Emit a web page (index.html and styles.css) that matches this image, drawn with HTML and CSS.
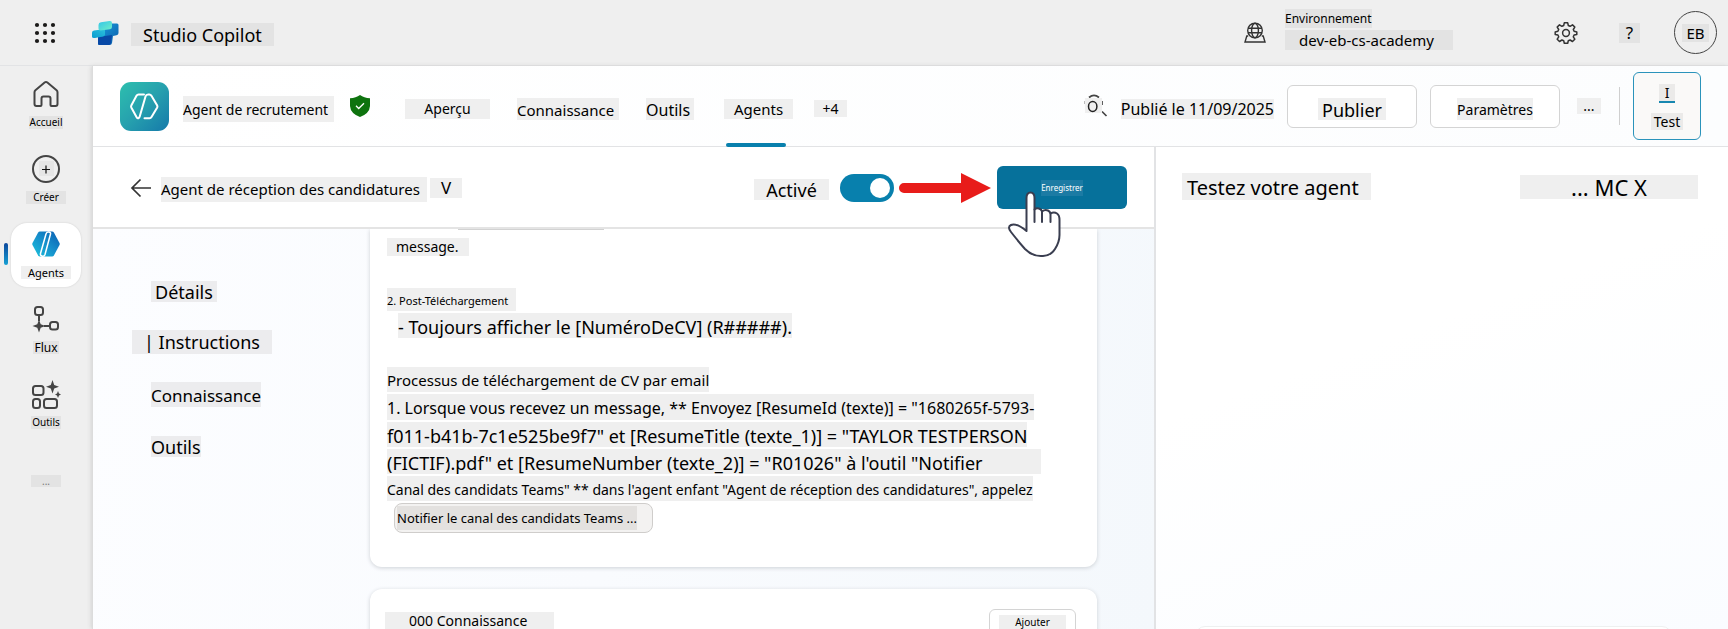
FILE: index.html
```html
<!DOCTYPE html>
<html lang="fr">
<head>
<meta charset="utf-8">
<meta name="viewport" content="width=device-width, initial-scale=1">
<title>Studio Copilot</title>
<link rel="stylesheet" href="styles.css">
</head>
<body>
<header class="topbar">
  <button class="icon-btn waffle" aria-label="Applications">
    <svg width="22" height="22" viewBox="0 0 22 22" fill="#1b1a19"><circle cx="3" cy="3" r="2.1"/><circle cx="11" cy="3" r="2.1"/><circle cx="19" cy="3" r="2.1"/><circle cx="3" cy="11" r="2.1"/><circle cx="11" cy="11" r="2.1"/><circle cx="19" cy="11" r="2.1"/><circle cx="3" cy="19" r="2.1"/><circle cx="11" cy="19" r="2.1"/><circle cx="19" cy="19" r="2.1"/></svg>
  </button>
  <svg class="brand-logo" width="28" height="26" viewBox="0 0 28 26">
    <defs>
      <linearGradient id="b1" x1="0" y1="0" x2="1" y2="1"><stop offset="0" stop-color="#35c5e8"/><stop offset="1" stop-color="#70f0c8"/></linearGradient>
      <linearGradient id="b2" x1="0" y1="0" x2="1" y2="1"><stop offset="0" stop-color="#1a9fe0"/><stop offset="1" stop-color="#0a5ba8"/></linearGradient>
      <linearGradient id="b3" x1="0" y1="1" x2="1" y2="0"><stop offset="0" stop-color="#0a9cd0"/><stop offset="1" stop-color="#2cc0dc"/></linearGradient>
    </defs>
    <path d="M19 3.500h7q1.500 0 1.500 1.500v8q0 2-2 2.300l-3.500.7-1 7q-.3 2-2.500 2H8.500Q7 25 7 23.500V16z" fill="url(#b2)"/>
    <path d="M7 17l7-1 7-1-1 8q-.4 2-2.500 2H8.500Q7 25 7 23.500z" fill="#0849a6"/>
    <path d="M3 10.500l11-1.500v5.500q0 1.500-2 2l-8 1.500q-3 .5-3-1.500v-4q0-1.700 2-2z" fill="url(#b3)"/>
    <path d="M10 2.200l8.500-1.100Q21 .8 21 3v4q0 2-2 2.300L9.500 10.500Q7.500 10.600 7.500 8.500V5q0-2.500 2.500-2.800z" fill="url(#b1)"/>
  </svg>
  <h1 class="hl dark brand">Studio Copilot</h1>
  <div class="top-right">
    <svg width="22" height="22" viewBox="0 0 22 22" fill="none" stroke="#333" stroke-width="1.400"><circle cx="11" cy="8.500" r="7.300"/><ellipse cx="11" cy="8.500" rx="3.400" ry="7.300"/><path d="M4 6.300h14M4 10.800h14M4.200 14H2.800L1 20h20l-1.800-6h-1.400"/></svg>
    <div class="env">
      <span class="hl dark env-label">Environnement</span>
      <span class="hl dark env-name">dev-eb-cs-academy</span>
    </div>
    <button class="icon-btn gear" aria-label="Réglages">
      <svg width="24" height="24" viewBox="0 0 24 24" fill="none" stroke="#333" stroke-width="1.500" stroke-linejoin="round"><circle cx="12" cy="12" r="3.400"/><path d="M10.300 1.800h3.400l.6 2.700 1.800.8 2.400-1.500 2.300 2.300-1.500 2.400.8 1.800 2.700.6v2.500l-2.700.6-.8 1.800 1.500 2.400-2.300 2.300-2.400-1.500-1.800.8-.6 2.500h-3.400l-.6-2.500-1.800-.8-2.400 1.500-2.300-2.300 1.500-2.400-.8-1.800-2.700-.6v-2.500l2.700-.6.8-1.800-1.500-2.400 2.300-2.300 2.400 1.500 1.800-.8z"/></svg>
    </button>
    <button class="icon-btn hl dark help">?</button>
    <button class="avatar"><span class="hl dark">EB</span></button>
  </div>
</header>

<div class="shell">
  <nav class="rail" aria-label="Navigation principale">
    <a class="rail-item" href="#accueil">
      <svg width="28" height="28" viewBox="0 0 28 28" fill="none" stroke="#444" stroke-width="2" stroke-linejoin="round"><path d="M2.500 12.200Q2.500 11 3.400 10.200L12.600 2.500Q14 1.400 15.400 2.500L24.600 10.200Q25.500 11 25.500 12.200V24Q25.500 26 23.500 26H19.500Q18.500 26 18.500 25V18.500Q18.500 16.500 16.500 16.500H11.500Q9.500 16.500 9.500 18.500V25Q9.500 26 8.500 26H4.500Q2.500 26 2.500 24z"/></svg>
      <span class="hl dark">Accueil</span>
    </a>
    <a class="rail-item" href="#creer">
      <svg width="28" height="28" viewBox="0 0 28 28" fill="none" stroke="#444"><circle cx="14" cy="14" r="13" stroke-width="2"/><path d="M7 6h15v15H7z" fill="#e6e6e6" stroke="none"/><path d="M14 10.500v8M10 14.500h8" stroke="#111" stroke-width="1.200"/></svg>
      <span class="hl dark wide">Créer</span>
    </a>
    <a class="rail-item current" href="#agents" aria-current="page">
      <svg width="28" height="28" viewBox="0 0 28 28">
        <defs><linearGradient id="ag" x1="0" y1="1" x2="1" y2="0"><stop offset="0" stop-color="#1cc4dc"/><stop offset=".5" stop-color="#1690cc"/><stop offset="1" stop-color="#0a5cb0"/></linearGradient></defs>
        <path d="M8 1.500h12q1.300 0 2 1.200L27.500 13q.5 1 0 2L22 25.300q-.7 1.200-2 1.200H8q-1.300 0-2-1.200L.5 15q-.5-1 0-2L6 2.700Q6.700 1.500 8 1.500z" fill="url(#ag)"/>
        <path d="M18.500 4L13 24.500q-.6 2-2.700 1.700-2.300-.5-1.800-2.700L14 4q.6-2.300 2.800-2 2.200.4 1.700 2z" fill="none" stroke="#fff" stroke-width="1.500"/>
      </svg>
      <span class="hl wide">Agents</span>
    </a>
    <a class="rail-item" href="#flux">
      <svg width="28" height="28" viewBox="0 0 28 28" fill="none" stroke="#444" stroke-width="2"><rect x="3" y="2" width="8" height="8" rx="2.500"/><rect x="18" y="17" width="8" height="7.500" rx="2.500"/><path d="M7 10v6M12 21h6"/><path d="M7 14.500l1.700 4.800 4.800 1.700-4.800 1.700L7 27.500l-1.700-4.800L.5 21l4.800-1.700z" fill="#444" stroke="none"/></svg>
      <span class="hl dark">Flux</span>
    </a>
    <a class="rail-item" href="#outils">
      <svg width="30" height="30" viewBox="0 0 30 30" fill="none" stroke="#444" stroke-width="2"><rect x="2" y="6" width="10.500" height="9" rx="2.500"/><rect x="2" y="19" width="7" height="9" rx="2.500"/><rect x="13" y="19" width="13" height="9" rx="2.500"/><path d="M21.500 0l1.700 5 4.800 1.700-4.800 1.700-1.700 5-1.700-5L15 6.700 19.800 5zM27 11l1 2.500 2 1-2 1-1 2.500-1-2.500-2-1 2-1z" fill="#444" stroke="none"/></svg>
      <span class="hl dark">Outils</span>
    </a>
    <button class="hl dark rail-more">...</button>
  </nav>

  <main class="main">
    <div class="agentbar">
      <svg class="agent-logo" width="49" height="49" viewBox="0 0 49 49">
        <defs><linearGradient id="lg" x1="0" y1="0" x2="1" y2="1"><stop offset="0" stop-color="#2dbfae"/><stop offset=".5" stop-color="#26a0ae"/><stop offset="1" stop-color="#1579aa"/></linearGradient></defs>
        <rect width="49" height="49" rx="11" fill="url(#lg)"/>
        <path d="M24 12.500h-5.500q-1.200 0-1.900 1.100L11.300 23.500q-.5 1 0 2L16.500 35q.9 1.700 2.200 1q.7-.3 1.100-1.800L25.500 14.500q.6-2 2.700-2h1.200q1.200 0 1.900 1.100l5.900 9.900q.5 1 0 2L31.500 35q-.7 1.200-1.900 1.200H24.500" fill="none" stroke="#fff" stroke-width="2" stroke-linecap="round"/>
      </svg>
      <h2 class="hl agent-name">Agent de recrutement</h2>
      <svg width="20" height="22" viewBox="0 0 20 22"><path d="M10 0Q14 3 20 3.200V11Q19.500 18.500 10 22Q.5 18.500 0 11V3.200Q6 3 10 0z" fill="#0e730e"/><path d="M6 10.800l2.700 2.700 5.300-5.300" fill="none" stroke="#fff" stroke-width="1.300"/></svg>
      <nav class="tabs" aria-label="Sections">
        <a class="tab" href="#apercu"><span class="hl t-overview">Aperçu</span></a>
        <a class="tab" href="#connaissance"><span class="hl t-knowledge">Connaissance</span></a>
        <a class="tab" href="#outils-agent"><span class="hl t-tools">Outils</span></a>
        <a class="tab active" href="#agents-enfants"><span class="hl t-agents">Agents</span></a>
        <button class="tab"><span class="hl t-more">+4</span></button>
      </nav>
      <div class="agent-actions">
        <svg class="search" width="24" height="24" viewBox="0 0 24 24"><path d="M5 3.500Q10-.8 15 3.500M1.500 7v3M18 7v4M18 17.500l4.500 4.500" fill="none" stroke="#444" stroke-width="1.700"/><rect x="1" y="4" width="17" height="15" fill="#efefef"/><ellipse cx="8.700" cy="12.500" rx="4.200" ry="4.900" fill="none" stroke="#222" stroke-width="1.500"/></svg>
        <span class="hl published">Publié le 11/09/2025</span>
        <button class="btn"><span class="hl b-publish">Publier</span></button>
        <button class="btn"><span class="hl b-settings">Paramètres</span></button>
        <button class="icon-btn hl more">...</button>
        <span class="rule"></span>
        <button class="test-btn"><span class="hl i-mark">I</span><span class="hl">Test</span></button>
      </div>
    </div>

    <div class="work">
      <section class="editor">
        <div class="editbar">
          <button class="icon-btn" aria-label="Retour"><svg width="22" height="20" viewBox="0 0 22 20" fill="none" stroke="#333" stroke-width="1.700"><path d="M21 10H2M10.500 1.500L2 10l8.500 8.500"/></svg></button>
          <h3 class="hl child-name">Agent de réception des candidatures</h3>
          <button class="icon-btn hl chevron">V</button>
          <div class="edit-actions">
            <label class="hl enabled" for="enabled">Activé</label>
            <input class="switch" type="checkbox" id="enabled" role="switch" checked>
            <svg class="red-arrow" width="92" height="30" viewBox="0 0 92 30" fill="#e81c1a"><path d="M5 10H62V0l30 15-30 15V20H5A5 5 0 0 1 5 10z"/></svg>
            <div class="save-wrap">
              <button class="save"><span>Enregistrer</span></button>
              <svg class="hand" width="54" height="67" viewBox="0 0 54 67" fill="#fff" stroke="#3a3e50" stroke-width="2" stroke-linejoin="round" stroke-linecap="round"><path d="M18.500 40V7Q18.500 1.500 22.500 1.500T26.500 7V18.500Q29 16.500 32 18Q33.500 18.700 34 20.500Q37 18 40 19.500Q42 20.500 42.500 22.500Q46 20.500 49 22.500Q51.500 24.200 51.500 29V44Q51.500 51 47 58Q43 64.500 35 65Q25 66 17 58Q10 50 3 41Q-1 36 3 34Q8 31.500 18.500 40"/><path d="M26.500 18.500V31M34 20.500V31M42.500 22.500V31" fill="none"/></svg>
            </div>
          </div>
        </div>
        <div class="canvas">
          <nav class="toc" aria-label="Sections de l'agent">
            <a class="hl toc-lg" href="#details">Détails</a>
            <a class="hl toc-current" href="#instructions">| Instructions</a>
            <a class="hl toc-md" href="#savoir">Connaissance</a>
            <a class="hl toc-sm" href="#actions">Outils</a>
          </nav>
          <div class="cards">
            <article class="card instructions" id="instructions">
              <p><span class="hl l-message">message.</span></p>
              <p class="para"><span class="hl l-step">2. Post-Téléchargement</span></p>
              <p class="indent"><span class="hl l-big">- Toujours afficher le [NuméroDeCV] (R#####).</span></p>
              <p class="para2"><span class="hl l-small">Processus de téléchargement de CV par email</span></p>
              <p><span class="hl l-mid">1. Lorsque vous recevez un message, ** Envoyez [ResumeId (texte)] = "1680265f-5793-</span></p>
              <p><span class="hl l-big">f011-b41b-7c1e525be9f7" et [ResumeTitle (texte_1)] = "TAYLOR TESTPERSON</span></p>
              <p><span class="hl l-big l-wide">(FICTIF).pdf" et [ResumeNumber (texte_2)] = "R01026" à l'outil "Notifier</span></p>
              <p><span class="hl l-canal">Canal des candidats Teams" ** dans l'agent enfant "Agent de réception des candidatures", appelez</span></p>
              <button class="chip"><span>Notifier le canal des candidats Teams ...</span></button>
            </article>
            <article class="card knowledge">
              <h4 class="hl">000 Connaissance</h4>
              <button class="add"><span class="hl">Ajouter</span></button>
            </article>
          </div>
        </div>
      </section>

      <aside class="tester">
        <div class="tester-head">
          <h3 class="hl tester-title">Testez votre agent</h3>
          <button class="icon-btn hl tester-tools">... MC X</button>
        </div>
        <textarea class="prompt" aria-label="Message"></textarea>
      </aside>
    </div>
  </main>
</div>
</body>
</html>
```

FILE: styles.css
```css
* { box-sizing: border-box; }

body {
  margin: 0;
  height: 100vh;
  display: flex;
  flex-direction: column;
  overflow: hidden;
  background: #efefef;
  color: #000;
  font-family: "Noto Sans", "Open Sans", sans-serif;
  font-size: 14px;
}

h1, h2, h3, h4, p { margin: 0; font-weight: 400; }
a { color: inherit; text-decoration: none; }
button { font: inherit; color: inherit; padding: 0; border: 0; background: none; cursor: pointer; }
svg { display: block; flex: none; }

.hl { display: block; background: #efefef; white-space: nowrap; line-height: 20px; }
.hl.dark { background: #e3e3e3; }

/* Top bar */
.topbar {
  flex: none;
  display: flex;
  align-items: center;
  height: 66px;
  padding: 0 11px 0 34px;
  border-bottom: 1px solid #e2e3e5;
}
.brand-logo { margin: 0 12px 0 35px; }
.brand { margin-top: 3px; padding: 1px 12px 0; min-width: 141px; font-size: 18px; line-height: 22px; }
.top-right { display: flex; align-items: center; margin-left: auto; }
.env { display: flex; flex-direction: column; align-items: flex-start; gap: 2px; margin: 0 101px 6px 19px; }
.env-label { padding-top: 1px; font-size: 12px; line-height: 18px; }
.env-name { padding: 0 14px; min-width: 168px; font-size: 15px; line-height: 20px; }
.help { width: 21px; margin: 0 34px 0 41px; font-size: 17px; }
.avatar {
  display: grid;
  place-items: center;
  width: 43px;
  height: 43px;
  border: 1px solid #444;
  border-radius: 50%;
}
.avatar .hl { font-size: 15px; line-height: 18px; padding: 0 4px; }

/* Left rail */
.shell { flex: 1; display: flex; min-height: 0; }
.rail {
  flex: none;
  display: flex;
  flex-direction: column;
  align-items: center;
  gap: 11px;
  width: 92px;
  padding-top: 7px;
}
.rail-item {
  position: relative;
  display: flex;
  flex-direction: column;
  align-items: center;
  justify-content: space-between;
  width: 70px;
  height: 64px;
  padding: 7px 0 8px;
  border-radius: 16px;
  font-size: 10px;
}
.rail-item .hl { padding: 0 1px; line-height: 13px; }
.rail-item .hl.wide { padding: 0 7px; }
.rail-item:nth-child(4) { font-size: 12px; }
.rail-item.current { background: #fff; box-shadow: 0 0 2px #ccc; font-size: 11px; }
.rail-item.current::before {
  content: "";
  position: absolute;
  left: -7px;
  top: 20px;
  width: 4px;
  height: 22px;
  border-radius: 2px;
  background: linear-gradient(#0c479c, #16a0d4);
}
.rail-more { width: 30px; margin-top: 27px; font-size: 10px; color: #777; }
.rail-more.hl { line-height: 12px; }

/* Main area */
.main {
  flex: 1;
  min-width: 0;
  display: flex;
  flex-direction: column;
  background: #fff;
  border-left: 1px solid #dcdcdc;
  box-shadow: -1px 0 4px #d4d4d4;
}
.agentbar {
  flex: none;
  display: flex;
  align-items: center;
  height: 81px;
  padding: 0 27px;
  border-bottom: 1px solid #e2e3e5;
  background: linear-gradient(90deg, #fff, #fcfdfe);
}
.agent-name { min-width: 151px; margin: 5px 16px 0 14px; padding-top: 2px; font-size: 14px; line-height: 24px; }
.tabs { display: flex; align-self: stretch; margin-left: 35px; }
.tab { position: relative; display: flex; align-items: center; padding-top: 5px; }
.tab.active::after {
  content: "";
  position: absolute;
  left: 2px;
  right: 7px;
  bottom: -1px;
  height: 4px;
  border-radius: 2px;
  background: #0880ad;
}
.t-overview { width: 85px; margin-right: 27px; text-align: center; font-size: 14px; }
.t-knowledge, .t-tools { padding-top: 2px; }
.t-knowledge { width: 102px; margin-right: 27px; font-size: 15px; }
.t-tools { width: 48px; margin-right: 30px; font-size: 16px; }
.t-agents { width: 69px; text-align: center; font-size: 15px; }
.t-more { width: 33px; margin-left: 21px; text-align: center; font-size: 14px; }
.t-more.hl { line-height: 17px; }
.agent-actions { display: flex; align-items: center; margin-left: auto; }
.search { margin-right: 13px; }
.published { margin: 5px 13px 0 0; font-size: 16px; }
.btn {
  display: grid;
  place-items: center;
  width: 130px;
  height: 43px;
  margin-right: 13px;
  padding-top: 5px;
  border: 1px solid #d4d4d4;
  border-radius: 6px;
  background: #fff;
}
.b-publish { padding: 2px 4px 0; font-size: 18px; }
.b-settings { padding-top: 2px; font-size: 14px; }
.more { width: 24px; margin: 0 18px 0 4px; }
.more.hl { line-height: 16px; }
.rule { width: 1px; height: 38px; margin-right: 13px; background: #cfcfcf; }
.test-btn {
  display: flex;
  flex-direction: column;
  align-items: center;
  gap: 10px;
  width: 68px;
  height: 68px;
  padding-top: 11px;
  border: 1px solid #2a93bb;
  border-radius: 6px;
  background: #faf9f8;
}
.test-btn .hl { padding: 0 3px; line-height: 17px; background: #ebeae9; }
.test-btn .i-mark { padding: 0 6px; border-bottom: 2px solid #1787b0; }

.work { flex: 1; display: grid; grid-template-columns: minmax(0, 1fr) 574px; min-height: 0; }
.editor { display: flex; flex-direction: column; min-height: 0; }
.editbar {
  flex: none;
  display: flex;
  align-items: center;
  height: 82px;
  padding: 1px 27px 0 37px;
  border-bottom: 2px solid #e4e4e4;
}
.child-name { min-width: 266px; margin: 3px 3px 0 9px; font-size: 15px; line-height: 25px; }
.chevron { width: 32px; font-size: 17px; }
.edit-actions { display: flex; align-items: center; margin-left: auto; }
.enabled { width: 75px; margin: 3px 11px 0 0; padding-top: 2px; text-align: center; font-size: 18px; }
.enabled.hl { line-height: 19px; }
.switch {
  appearance: none;
  display: flex;
  align-items: center;
  justify-content: flex-end;
  width: 54px;
  height: 28px;
  margin: 0 5px 0 0;
  padding: 4px;
  border-radius: 14px;
  background: #0880ad;
}
.switch::before { content: ""; width: 20px; height: 20px; border-radius: 50%; background: #fff; }
.red-arrow { margin-right: 6px; }
.save-wrap { position: relative; z-index: 2; }
.save {
  display: grid;
  place-items: center;
  width: 130px;
  height: 43px;
  border-radius: 6px;
  background: #06719b;
  color: #fff;
  font-size: 8px;
}
.save span { line-height: 16px; background: #1c7ba4; }
.hand { position: absolute; left: 11px; top: 25px; pointer-events: none; }

.canvas {
  flex: 1;
  display: flex;
  min-height: 0;
  overflow: hidden;
  padding-right: 57px;
  background: linear-gradient(100deg, #fcfdff, #f9fbfe 50%, #f4f8fc);
}
.toc {
  flex: none;
  display: flex;
  flex-direction: column;
  align-items: flex-start;
  width: 277px;
  padding: 52px 0 0 39px;
}
.toc .hl { background: #ececee; font-size: 18px; }
.toc .toc-lg { margin-left: 19px; padding: 2px 4px 0; line-height: 19px; }
.toc .toc-current { min-width: 138px; margin: 28px 0; padding: 0 12px; line-height: 24px; }
.toc .toc-md { margin-left: 19px; padding-top: 3px; font-size: 17px; line-height: 22px; }
.toc .toc-sm { margin: 29px 0 0 19px; padding-top: 1px; }

.cards { flex: 1; min-width: 0; display: flex; flex-direction: column; gap: 22px; }
.card { flex: none; background: #fff; border-radius: 12px; box-shadow: 0 1px 4px #cdd1d6; }
.instructions { position: relative; padding: 9px 17px 34px; border-radius: 0 0 12px 12px; }
/* lower edge of the chip that is scrolled out of view */
.instructions::before {
  content: "";
  position: absolute;
  left: 88px;
  top: 0;
  width: 146px;
  height: 1px;
  background: #d2d2d2;
}
.instructions p { display: flex; margin-bottom: 2px; }
.instructions p.para { margin-top: 32px; }
.instructions p.indent { padding-left: 11px; }
.instructions p.para2 { margin-top: 29px; }
.instructions .hl { padding-top: 2px; line-height: 23px; }
.instructions .l-message { padding: 0 9px; min-width: 82px; font-size: 14px; line-height: 18px; }
.instructions .l-step { min-width: 129px; font-size: 11px; line-height: 21px; }
.l-small { font-size: 15px; }
.instructions .l-mid { padding-top: 3px; font-size: 16px; }
.instructions .l-big { padding-top: 3px; font-size: 18px; line-height: 22px; }
.l-wide { min-width: 654px; }
.l-canal { font-size: 14px; }
.chip {
  display: block;
  margin-left: 7px;
  padding: 2px 15px 2px 2px;
  border: 1px solid #cfcdcb;
  border-radius: 8px;
  background: #f3f2f1;
  font-size: 13px;
}
.chip span { display: block; padding-top: 1px; line-height: 23px; background: #e3e1df; }

.knowledge { display: flex; align-items: flex-start; justify-content: space-between; padding: 20px 21px 40px 15px; }
.knowledge h4 { min-width: 169px; margin-top: 3px; padding: 0 24px; line-height: 18px; }
.add {
  display: grid;
  place-items: center;
  width: 87px;
  height: 43px;
  padding-bottom: 16px;
  border: 1px solid #d4d4d4;
  border-radius: 6px;
  background: #fff;
  font-size: 10px;
}
.add .hl { width: 67px; line-height: 15px; }

/* Test panel */
.tester {
  display: flex;
  flex-direction: column;
  justify-content: space-between;
  min-height: 0;
  padding: 26px 30px 0 26px;
  border-left: 2px solid #e2e3e5;
  background: linear-gradient(160deg, #fff 40%, #fafcff);
}
.tester-head { display: flex; align-items: center; justify-content: space-between; }
.tester-title { min-width: 189px; padding: 2px 5px 0; font-size: 20px; line-height: 25px; }
.tester-tools { width: 178px; font-size: 22px; }
.tester-tools.hl { line-height: 24px; }
.prompt {
  height: 26px;
  margin: 0 26px -23px 13px;
  border: 1px solid #eef0f0;
  border-radius: 10px;
  background: #fff;
  resize: none;
}
```
